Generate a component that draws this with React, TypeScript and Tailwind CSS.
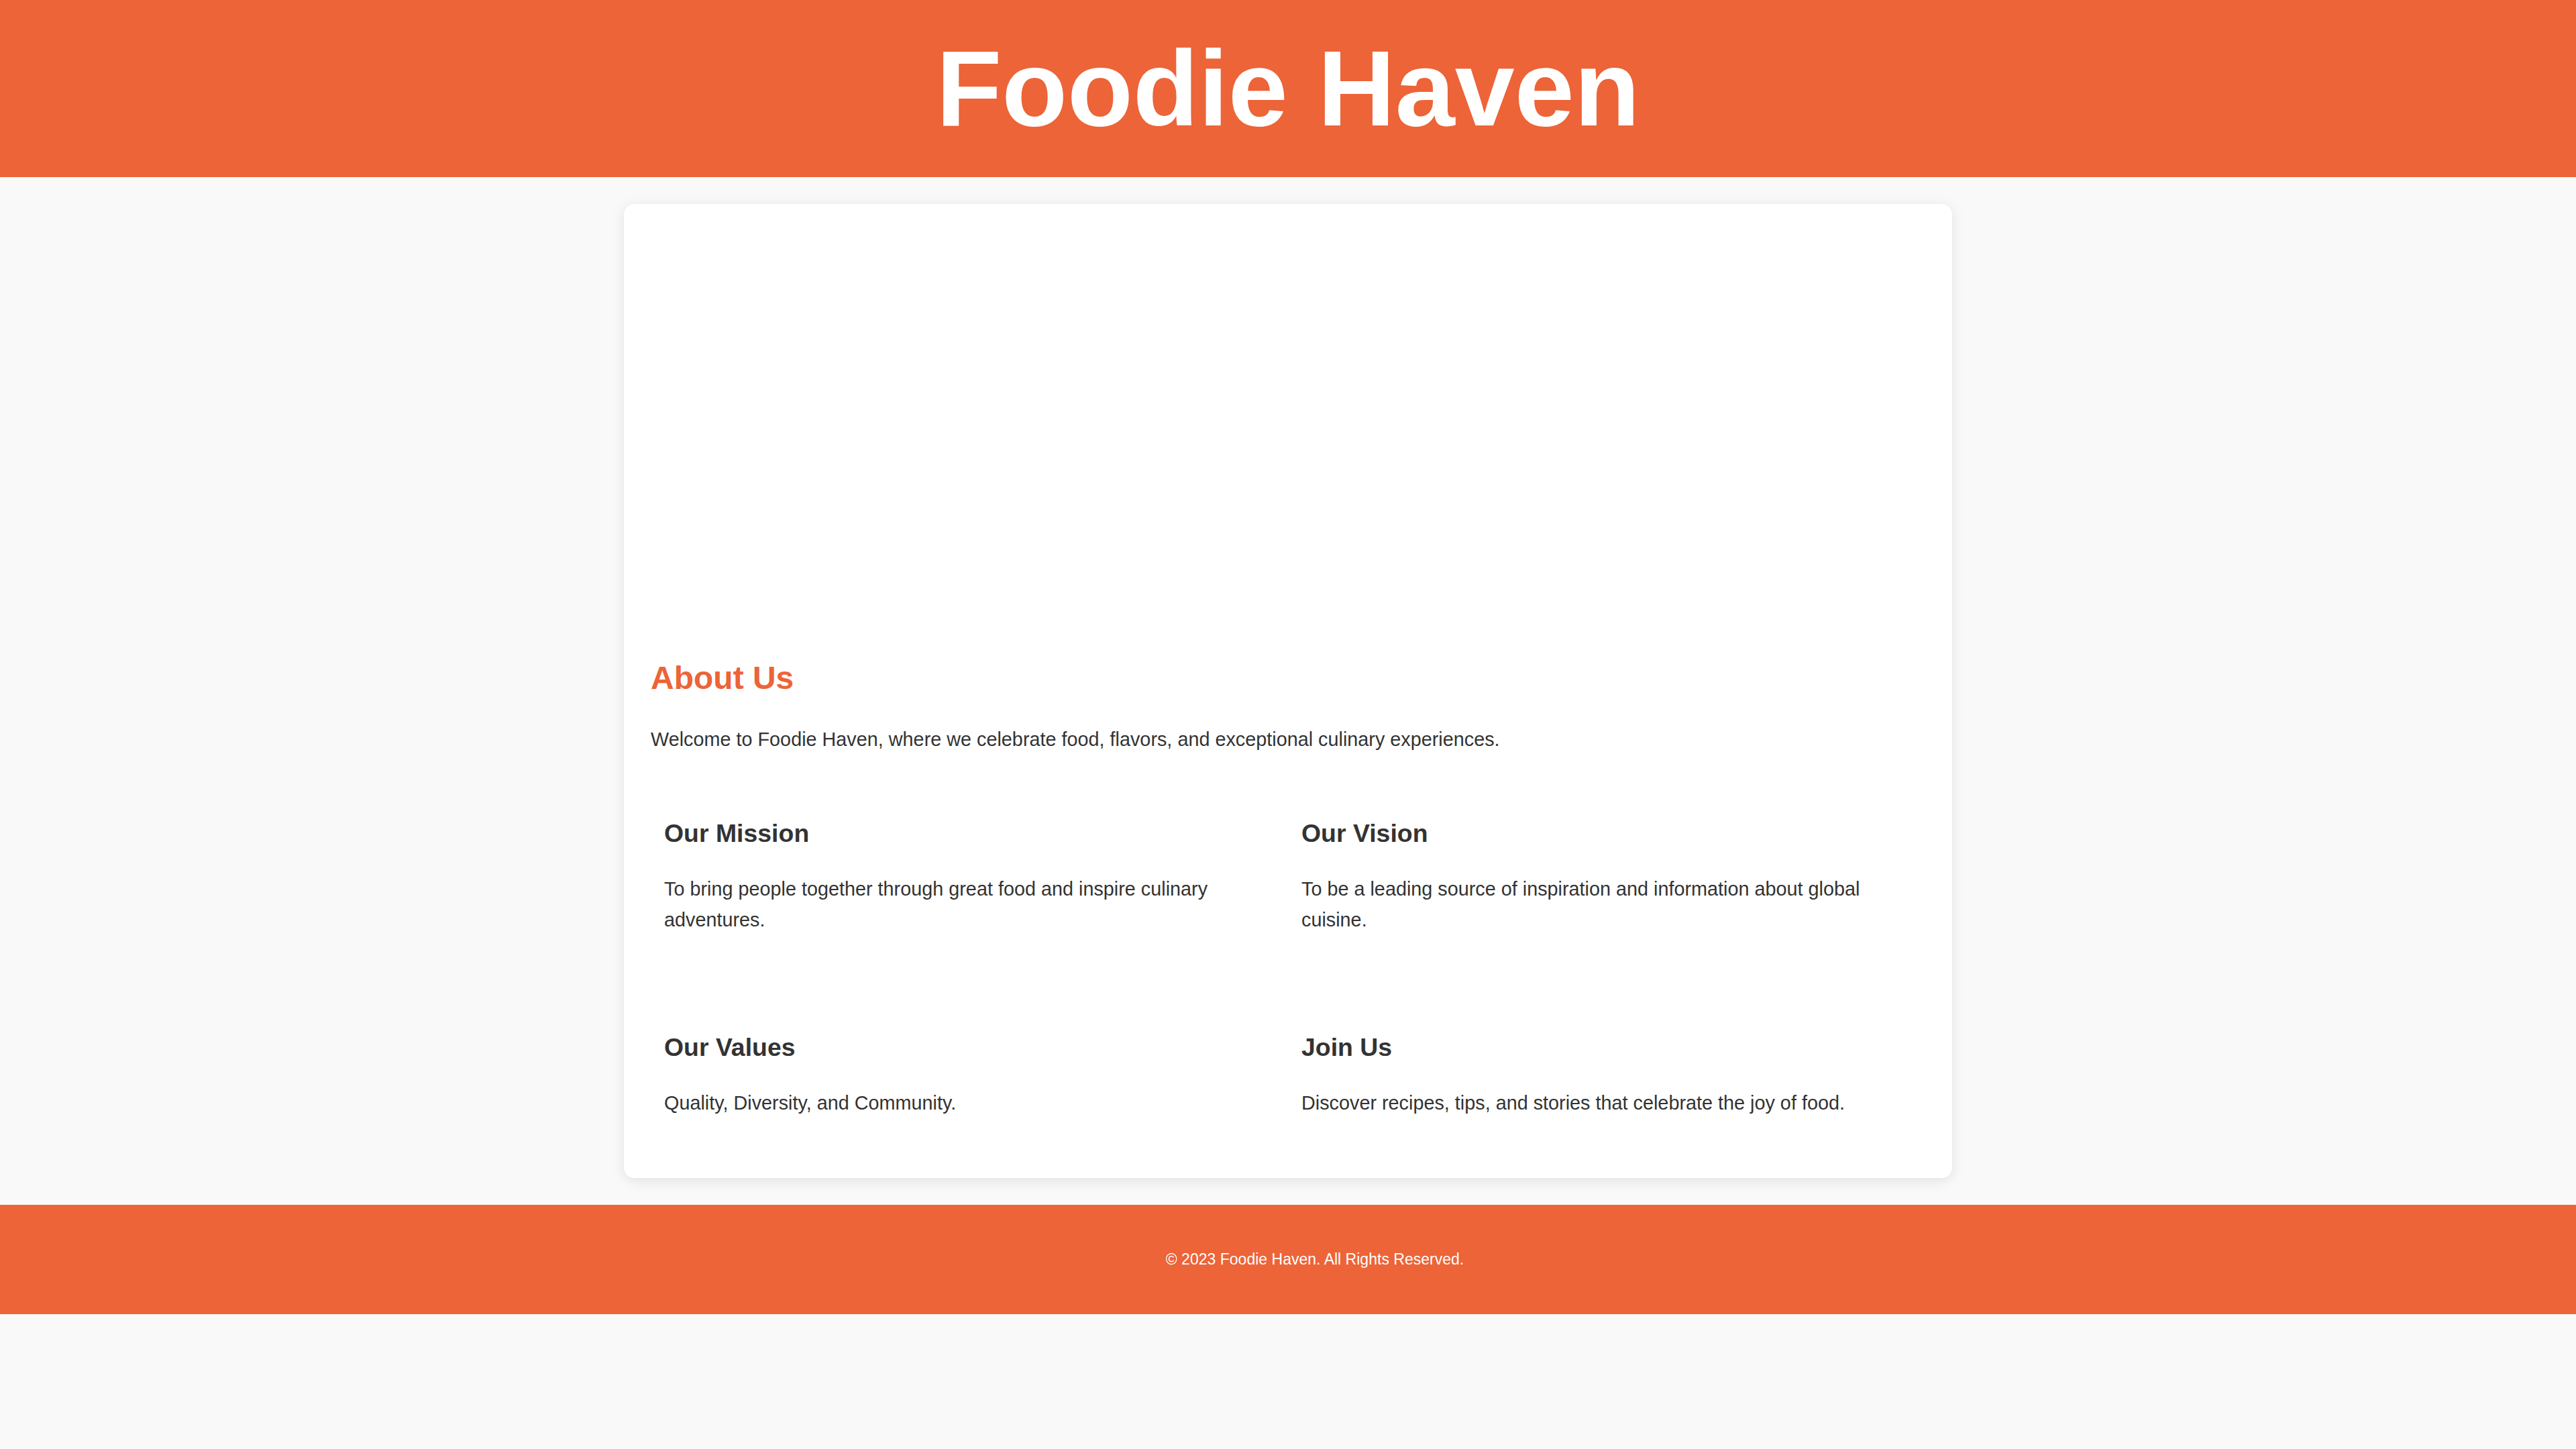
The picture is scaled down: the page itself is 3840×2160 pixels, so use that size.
import React from "react";

type Block = {
  title: string;
  text: string;
};

const blocks: Block[] = [
  {
    title: "Our Mission",
    text: "To bring people together through great food and inspire culinary adventures.",
  },
  {
    title: "Our Vision",
    text: "To be a leading source of inspiration and information about global cuisine.",
  },
  {
    title: "Our Values",
    text: "Quality, Diversity, and Community.",
  },
  {
    title: "Join Us",
    text: "Discover recipes, tips, and stories that celebrate the joy of food.",
  },
];

const App = () => {
  return (
    <div
      className="min-h-screen overflow-hidden bg-[#f9f9f9] text-[#333]"
      style={{ fontFamily: '"Liberation Sans", Arial, sans-serif' }}
    >
      {/* Header */}
      <header className="bg-[#ec6438] py-[40px] text-center text-white">
        <h1 className="text-[160px] font-bold leading-[184px]">Foodie Haven</h1>
      </header>

      {/* Card */}
      <main className="mx-auto my-[40px] w-[1980px] rounded-[16px] bg-white p-[40px] shadow-[0_4px_20px_rgba(0,0,0,0.1)]">
        <div className="h-[600px]" />

        <h2 className="mt-[39px] text-[48px] font-bold leading-[55px] text-[#ec6438]">
          About Us
        </h2>
        <p className="mt-[41px] text-[28.8px] leading-[46.08px]">
          Welcome to Foodie Haven, where we celebrate food, flavors, and
          exceptional culinary experiences.
        </p>

        <div className="mt-[38px] grid grid-cols-2 gap-y-[40px]">
          {blocks.map((b) => (
            <div key={b.title} className="p-[20px]">
              <h3 className="mt-[37.44px] text-[37.44px] font-bold leading-[43px] text-[#333]">
                {b.title}
              </h3>
              <p className="mt-[38px] mb-[28.8px] text-[28.8px] leading-[46.08px]">
                {b.text}
              </p>
            </div>
          ))}
        </div>
      </main>

      {/* Footer */}
      <footer className="bg-[#ec6438] py-[68px] pl-[80px] text-center text-white">
        <p className="text-[23.04px] leading-[27px]">
          © 2023 Foodie Haven. All Rights Reserved.
        </p>
      </footer>
    </div>
  );
};

export default App;
